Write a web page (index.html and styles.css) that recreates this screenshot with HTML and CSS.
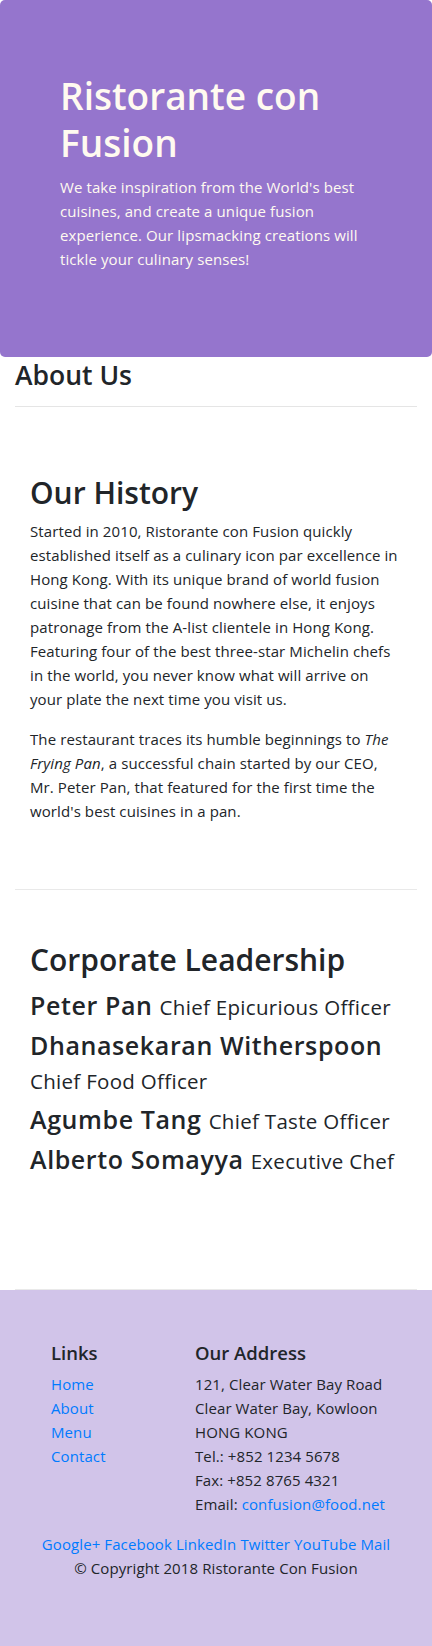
FILE: index.html
```html
<!DOCTYPE html>
<html lang="en">
<head>
<meta charset="utf-8">
<title>Ristorante con Fusion - About Us</title>
<link rel="stylesheet" href="styles.css">
</head>
<body>
<header class="jumbotron">
  <div class="jumbotron-text">
    <h1 class="brand-title">Ristorante con Fusion</h1>
    <p class="brand-lead">We take inspiration from the World's best cuisines, and create a unique fusion experience. Our lipsmacking creations will tickle your culinary senses!</p>
  </div>
</header>
<main class="container">
  <div class="page-heading">
    <h3 class="page-title">About Us</h3>
    <hr class="rule">
  </div>
  <section class="row-content">
    <h2 class="section-title">Our History</h2>
    <p class="history-text">Started in 2010, Ristorante con Fusion quickly established itself as a culinary icon par excellence in Hong Kong. With its unique brand of world fusion cuisine that can be found nowhere else, it enjoys patronage from the A-list clientele in Hong Kong. Featuring four of the best three-star Michelin chefs in the world, you never know what will arrive on your plate the next time you visit us.</p>
    <p class="history-text">The restaurant traces its humble beginnings to <em>The Frying Pan</em>, a successful chain started by our CEO, Mr. Peter Pan, that featured for the first time the world's best cuisines in a pan.</p>
  </section>
  <section class="row-content">
    <h2 class="section-title">Corporate Leadership</h2>
    <ul class="leaders">
      <li><h4 class="leader">Peter Pan <small class="leader-role">Chief Epicurious Officer</small></h4></li>
      <li><h4 class="leader">Dhanasekaran Witherspoon <small class="leader-role">Chief Food Officer</small></h4></li>
      <li><h4 class="leader">Agumbe Tang <small class="leader-role">Chief Taste Officer</small></h4></li>
      <li><h4 class="leader">Alberto Somayya <small class="leader-role">Executive Chef</small></h4></li>
    </ul>
  </section>
</main>
<footer class="footer">
  <div class="footer-cols">
    <div class="footer-col">
      <h5 class="footer-title">Links</h5>
      <ul class="footer-links">
        <li><a class="link" href="#">Home</a></li>
        <li><a class="link" href="#">About</a></li>
        <li><a class="link" href="#">Menu</a></li>
        <li><a class="link" href="#">Contact</a></li>
      </ul>
    </div>
    <div class="footer-col">
      <h5 class="footer-title">Our Address</h5>
      <address class="address">
        121, Clear Water Bay Road<br>
        Clear Water Bay, Kowloon<br>
        HONG KONG<br>
        Tel.: +852 1234 5678<br>
        Fax: +852 8765 4321<br>
        Email: <a class="link" href="mailto:confusion@food.net">confusion@food.net</a>
      </address>
    </div>
  </div>
  <div class="social">
    <a class="link" href="#">Google+</a>
    <a class="link" href="#">Facebook</a>
    <a class="link" href="#">LinkedIn</a>
    <a class="link" href="#">Twitter</a>
    <a class="link" href="#">YouTube</a>
    <a class="link" href="#">Mail</a>
  </div>
  <p class="copyright">© Copyright 2018 Ristorante Con Fusion</p>
</footer>
</body>
</html>
```

FILE: styles.css
```css
* {
  box-sizing: border-box;
}

html,
body {
  margin: 0;
  padding: 0;
}

body {
  font-family: "Open Sans", "Noto Sans", sans-serif;
  font-size: 15px;
  line-height: 24px;
  letter-spacing: 0.1px;
  color: #212529;
  background: #fff;
}

.jumbotron {
  background: #9575cd;
  color: #fffaf0;
  border-radius: 5px;
  padding: 72px 60px 86px;
}

.brand-title {
  font-size: 37px;
  line-height: 47px;
  font-weight: 600;
  letter-spacing: 0;
  margin: 0 0 9px;
}

.brand-lead {
  margin: 0;
}

.container {
  padding: 0 15px;
}

.page-title {
  font-size: 26.5px;
  line-height: 32px;
  font-weight: 600;
  letter-spacing: 0;
  margin: 2px 0 0;
}

.rule {
  border: 0;
  border-top: 1px solid rgba(0, 0, 0, 0.1);
  height: 0;
  margin: 15px 0 16px;
}

.row-content {
  padding: 50px 15px;
  border-bottom: 1px solid #e9e9e9;
  min-height: 400px;
}

.section-title {
  font-size: 30px;
  line-height: 40px;
  font-weight: 600;
  letter-spacing: 0;
  margin: 0 0 6px;
}

.history-text {
  margin: 0 0 16px;
}

.leaders {
  list-style: none;
  margin: 0 -15px 0 0;
  padding: 2px 0 0;
}

.leader {
  font-size: 25px;
  line-height: 34px;
  font-weight: 600;
  letter-spacing: 0.6px;
  margin: 0 0 6px;
}

.leader-role {
  font-size: 20.5px;
  font-weight: 400;
  line-height: 1;
  letter-spacing: 0.3px;
  white-space: nowrap;
}

.footer {
  background: #d1c4e9;
  padding: 51px 0 50px;
}

.footer-cols {
  display: grid;
  grid-template-columns: 144px 1fr;
  margin: 0 15px 0 51px;
}

.footer-title {
  font-size: 18.5px;
  line-height: 24px;
  font-weight: 600;
  letter-spacing: 0;
  margin: 0 0 7px;
}

.footer-links {
  list-style: none;
  margin: 0;
  padding: 0;
}

.address {
  font-style: normal;
  margin: 0 0 16px;
}

.link {
  color: #007bff;
  text-decoration: none;
}

.social {
  text-align: center;
}

.copyright {
  text-align: center;
  margin: 0 0 16px;
}
```
